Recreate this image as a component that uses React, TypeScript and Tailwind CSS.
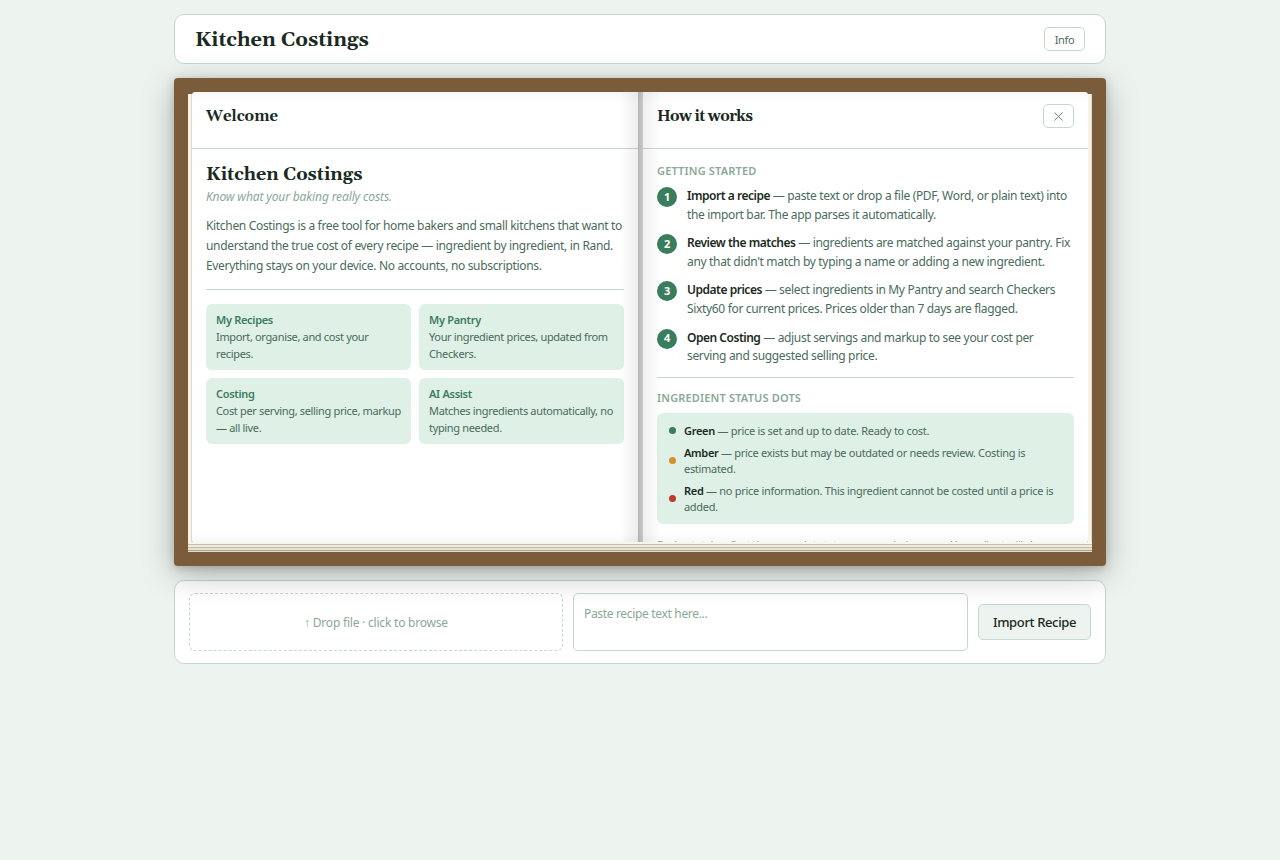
const FEATURES = [
  { title: 'My Recipes', lines: ['Import, organise, and cost your', 'recipes.'] },
  { title: 'My Pantry', lines: ['Your ingredient prices, updated from', 'Checkers.'] },
  { title: 'Costing', lines: ['Cost per serving, selling price, markup', '— all live.'] },
  { title: 'AI Assist', lines: ['Matches ingredients automatically, no', 'typing needed.'] },
];

const STEPS = [
  { title: 'Import a recipe', rest: ' — paste text or drop a file (PDF, Word, or plain text) into', next: 'the import bar. The app parses it automatically.' },
  { title: 'Review the matches', rest: ' — ingredients are matched against your pantry. Fix', next: "any that didn't match by typing a name or adding a new ingredient." },
  { title: 'Update prices', rest: ' — select ingredients in My Pantry and search Checkers', next: 'Sixty60 for current prices. Prices older than 7 days are flagged.' },
  { title: 'Open Costing', rest: ' — adjust servings and markup to see your cost per', next: 'serving and suggested selling price.' },
];

const DOTS = [
  { color: 'bg-[#3a7d5c]', title: 'Green', rest: ' — price is set and up to date. Ready to cost.', next: '' },
  { color: 'bg-[#d4922a]', title: 'Amber', rest: ' — price exists but may be outdated or needs review. Costing is', next: 'estimated.' },
  { color: 'bg-[#c0392b]', title: 'Red', rest: ' — no price information. This ingredient cannot be costed until a price is', next: 'added.' },
];

function WelcomePage() {
  return (
    <section className="flex w-[446px] flex-col overflow-hidden rounded-tl-[3px] rounded-bl-[1px] bg-white">
      <div className="h-[57px] shrink-0 border-b border-[#c5d8d0] px-3.5 pt-[13px]">
        <h2 className="font-['Georgia','Gelasio','DejaVu_Serif',serif] text-[15px] leading-6 font-bold tracking-normal">Welcome</h2>
      </div>
      <div className="px-3.5 pt-3.5">
        <h3 className="font-['Georgia','Gelasio','DejaVu_Serif',serif] text-[18px] leading-6 font-bold tracking-normal">Kitchen Costings</h3>
        <p className="mt-px leading-[18px] tracking-[-0.13px] text-[#8aa898] italic">Know what your baking really costs.</p>
        <p className="mt-2.5 leading-5 text-[#4a6b5c]">
          Kitchen Costings is a free tool for home bakers and small kitchens that want to<br />
          understand the true cost of every recipe — ingredient by ingredient, in Rand.<br />
          Everything stays on your device. No accounts, no subscriptions.
        </p>
        <div className="mt-[13px] h-px bg-[#c5d8d0]" />
        <div className="mt-3.5 grid grid-cols-2 gap-2">
          {FEATURES.map((f) => (
            <div key={f.title} className="h-[66px] rounded-md bg-[#dff0e6] px-2.5 py-[7px] text-[11px] leading-[17px] tracking-[-0.34px] text-[#4a6b5c]">
              <div className="font-semibold tracking-[-0.3px] text-[#3a7d5c]">{f.title}</div>
              {f.lines.map((l) => <div key={l}>{l}</div>)}
            </div>
          ))}
        </div>
      </div>
    </section>
  );
}

function HowItWorksPage() {
  return (
    <section className="flex w-[445px] flex-col overflow-hidden rounded-tr-[3px] rounded-br-[1px] bg-white">
      <div className="flex h-[57px] shrink-0 items-start justify-between border-b border-[#c5d8d0] px-3.5 pt-3">
        <h2 className="mt-px font-['Georgia','Gelasio','DejaVu_Serif',serif] text-[15px] leading-6 font-bold tracking-[-0.6px]">How it works</h2>
        <button className="flex h-6 w-[31px] items-center justify-center rounded-[5px] border border-[#c5d8d0]">
          <svg width="9" height="9" viewBox="0 0 9 9" className="mt-px stroke-[#6b8a7c]"><path d="M.5 .5l8 8M8.5 .5l-8 8" /></svg>
        </button>
      </div>
      <div className="px-3.5 pt-3.5">
        <h4 className="text-[11px] leading-4 font-semibold tracking-[0.17px] text-[#8aa898]">GETTING STARTED</h4>
        <ol className="mt-2 flex flex-col gap-2.5">
          {STEPS.map((s, i) => (
            <li key={s.title} className="flex gap-2.5 leading-[18.6px] text-[#4a6b5c]">
              <span className="flex size-5 shrink-0 items-center justify-center rounded-full bg-[#3a7d5c] text-[11px] font-bold text-white">{i + 1}</span>
              <div>
                <div><strong className="font-semibold tracking-[-0.48px] text-[#1a2a22]">{s.title}</strong>{s.rest}</div>
                <div>{s.next}</div>
              </div>
            </li>
          ))}
        </ol>
        <div className="mt-[11px] h-px bg-[#c5d8d0]" />
        <h4 className="mt-3 text-[11px] leading-4 font-semibold tracking-[0.17px] text-[#8aa898]">INGREDIENT STATUS DOTS</h4>
        <ul className="mt-[7px] flex h-[111px] flex-col gap-1.5 rounded-md bg-[#dff0e6] px-3 py-2.5 text-[11px] leading-4 tracking-[-0.3px] text-[#4a6b5c]">
          {DOTS.map((d) => (
            <li key={d.title} className="flex items-center gap-2">
              <span className={`size-[7px] shrink-0 rounded-full ${d.color}`} />
              <div>
                <div><strong className="font-semibold text-[#1a2a22]">{d.title}</strong>{d.rest}</div>
                {d.next && <div>{d.next}</div>}
              </div>
            </li>
          ))}
        </ul>
        <p className="mt-3 text-[11px] leading-[17px] tracking-[-0.38px] text-[#8aa898]">Recipe totals reflect the same dot status — any missing or red ingredient will show</p>
      </div>
    </section>
  );
}

export default function App() {
  return (
    <div className="min-h-screen bg-[#edf3ef] py-3.5 font-['Noto_Sans',sans-serif] text-[12px] tracking-[-0.33px] whitespace-nowrap text-[#1a2a22]">
      <div className="mx-auto flex w-[932px] flex-col gap-3.5">
        <header className="flex h-[50px] items-center justify-between rounded-[10px] border border-[#c5d8d0] bg-white px-5">
          <h1 className="pt-0.5 font-['Georgia','Gelasio','DejaVu_Serif',serif] text-[20px] leading-6 font-bold tracking-normal">Kitchen Costings</h1>
          <button className="h-6 w-[41px] rounded-[5px] border border-[#c5d8d0] pt-0.5 text-[11px] text-[#4a6b5c]">Info</button>
        </header>

        <main className="relative h-[488px] rounded bg-[#7a5c3a] p-3.5 shadow-[0_8px_32px_rgba(0,0,0,0.28),0_2px_8px_rgba(0,0,0,0.18)]">
          <div className="relative flex h-[450px]">
            <div className="mt-0.5 w-1 border-r border-[#e4d8c8] bg-[#f9f2ea]" />
            <WelcomePage />
            <div className="w-[5px] bg-linear-to-r from-[#b4b4b4] to-[#cccccc]" />
            <HowItWorksPage />
            <div className="mt-0.5 w-1 border-r border-[#e4d8c8] bg-[#f7f2ec]" />
            <div className="pointer-events-none absolute inset-y-0 left-[432px] w-[18px] bg-linear-to-r from-transparent to-black/7" />
            <div className="pointer-events-none absolute inset-y-0 left-[455px] w-[18px] bg-linear-to-l from-transparent to-black/6" />
            <div className="pointer-events-none absolute inset-x-1 top-0 h-3 bg-linear-to-b from-black/3 to-transparent" />
            <div className="pointer-events-none absolute inset-x-1 bottom-0 h-3 bg-linear-to-t from-black/3 to-transparent" />
          </div>
          <div className="flex h-2.5 flex-col">
            <div className="h-0.5 bg-[#f9f4ec]" />
            <div className="h-px bg-[#c8bfae]" />
            <div className="h-0.5 bg-[#f0eadc]" />
            <div className="h-px bg-[#c0b8a6]" />
            <div className="h-0.5 bg-[#e8e1d0]" />
            <div className="h-px bg-[#b0a690]" />
            <div className="h-px bg-[#e4dcc8]" />
          </div>
        </main>

        <footer className="flex h-[84px] items-center gap-2.5 rounded-[10px] border border-[#c5d8d0] bg-white px-3.5">
          <div className="flex h-[58px] w-[374px] items-center justify-center rounded-md border border-dashed border-[#c5d8d0] pt-0.5 tracking-[-0.21px] text-[#8aa898]">↑ Drop file · click to browse</div>
          <div className="h-[58px] w-[395px] rounded-[5px] border border-[#c5d8d0] px-2.5 py-[11px] leading-[18px] text-[#8aa898]">Paste recipe text here...</div>
          <button className="h-9 w-[113px] rounded-[5px] border border-[#c5d8d0] bg-[#edf3ef] pt-0.5 text-[13px] font-medium tracking-[-0.36px]">Import Recipe</button>
        </footer>
      </div>
    </div>
  );
}
